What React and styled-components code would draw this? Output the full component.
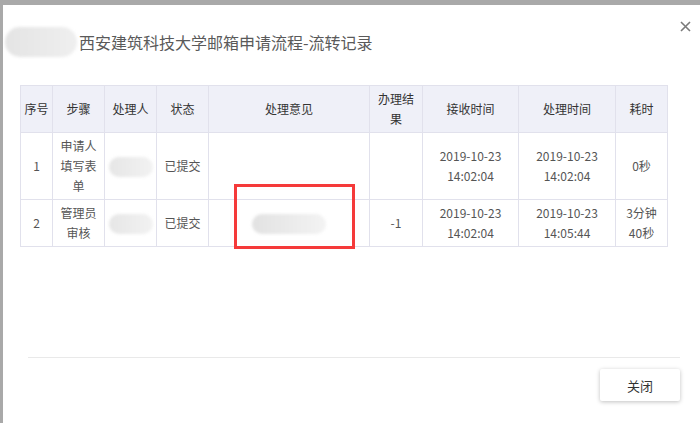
import React from "react";
import styled, { createGlobalStyle } from "styled-components";

const Global = createGlobalStyle`
  html, body { margin: 0; padding: 0; }
  body {
    background: #a9a9a9;
    font-family: "Noto Sans CJK SC", "Noto Sans", sans-serif;
    overflow: hidden;
  }
`;

const Modal = styled.div`
  position: relative;
  margin: 5px 0 0 3px;
  width: 697px;
  height: calc(100vh - 5px);
  background: #fff;
  display: flex;
  flex-direction: column;
  box-sizing: border-box;
`;

const Header = styled.div`
  display: flex;
  align-items: center;
  padding: 24px 0 30px 2px;
  height: 26px;
`;

const Blur = styled.span`
  display: inline-block;
  width: ${(p) => p.w}px;
  height: ${(p) => p.h}px;
  border-radius: ${(p) => p.h / 2}px;
  background: linear-gradient(90deg, ${(p) => p.from}, ${(p) => p.to});
  filter: blur(1.5px);
  vertical-align: middle;
`;

const Title = styled.h2`
  margin: 0 0 0 2px;
  font-size: 16px;
  font-weight: 400;
  color: #5a5a5a;
  line-height: 26px;
`;

const CloseX = styled.button`
  position: absolute;
  top: 14px;
  right: 8px;
  width: 14px;
  height: 14px;
  padding: 0;
  border: 0;
  background: none;
  display: flex;
  align-items: center;
  justify-content: center;
`;

const Content = styled.div`
  flex: 1;
  padding: 0 0 0 17px;
`;

const Table = styled.table`
  width: 647px;
  table-layout: fixed;
  border-collapse: collapse;
  font-size: 12px;
  color: #555;
  text-align: center;
`;

const Th = styled.th`
  background: #eff0f8;
  border: 1px solid #e1e1ec;
  font-weight: 400;
  color: #333;
  padding: 3px ${(p) => (p.$tight ? 2 : 4)}px;
  line-height: 20px;
  height: 40px;
`;

const Td = styled.td`
  border: 1px solid #e1e1ec;
  padding: 3px ${(p) => (p.$tight ? 2 : 4)}px;
  line-height: 20px;
  height: 40px;
`;

const Footer = styled.div`
  margin: 0 20px 0 25px;
  border-top: 1px solid #e9e9e9;
  padding: 11px 0 22px;
  display: flex;
  justify-content: flex-end;
`;

const Button = styled.button`
  width: 80px;
  height: 32px;
  border: 0;
  background: #fff;
  border-radius: 2px;
  box-shadow: 0 1px 4px rgba(0, 0, 0, 0.25);
  font-family: inherit;
  font-size: 13px;
  color: #333;
  cursor: pointer;
`;

const Mark = styled.div`
  position: absolute;
  left: 231px;
  top: 179px;
  width: 121px;
  height: 65px;
  border: 3px solid #f53a3a;
  box-sizing: border-box;
  pointer-events: none;
`;

const widths = [32, 52, 52, 52, 161, 53, 96, 97, 52];
const heads = ["序号", "步骤", "处理人", "状态", "处理意见", "办理结果", "接收时间", "处理时间", "耗时"];

const Name = () => <Blur w={44} h={20} from="#e6e6e6" to="#f2f2f2" />;

export default function App() {
  return (
    <>
      <Global />
      <Modal>
        <Header>
          <Blur w={72} h={30} from="#e4e4e4" to="#efefef" />
          <Title>西安建筑科技大学邮箱申请流程-流转记录</Title>
        </Header>
        <CloseX aria-label="close">
          <svg width="11" height="11" viewBox="0 0 11 11">
            <path d="M1 1L10 10M10 1L1 10" stroke="#7a7a7a" strokeWidth="1.6" />
          </svg>
        </CloseX>
        <Content>
          <Table>
            <colgroup>
              {widths.map((w, i) => (
                <col key={i} style={{ width: w }} />
              ))}
            </colgroup>
            <thead>
              <tr>
                {heads.map((h, i) => (
                  <Th key={h} $tight={i === 0}>{h}</Th>
                ))}
              </tr>
            </thead>
            <tbody>
              <tr>
                <Td $tight>1</Td>
                <Td>申请人填写表单</Td>
                <Td><Name /></Td>
                <Td>已提交</Td>
                <Td></Td>
                <Td></Td>
                <Td>2019-10-23 14:02:04</Td>
                <Td>2019-10-23 14:02:04</Td>
                <Td>0秒</Td>
              </tr>
              <tr>
                <Td $tight>2</Td>
                <Td>管理员审核</Td>
                <Td><Name /></Td>
                <Td>已提交</Td>
                <Td><Blur w={74} h={20} from="#e2e2e2" to="#f3f3f3" /></Td>
                <Td>-1</Td>
                <Td>2019-10-23 14:02:04</Td>
                <Td>2019-10-23 14:05:44</Td>
                <Td>3分钟40秒</Td>
              </tr>
            </tbody>
          </Table>
        </Content>
        <Footer>
          <Button>关闭</Button>
        </Footer>
        <Mark />
      </Modal>
    </>
  );
}
